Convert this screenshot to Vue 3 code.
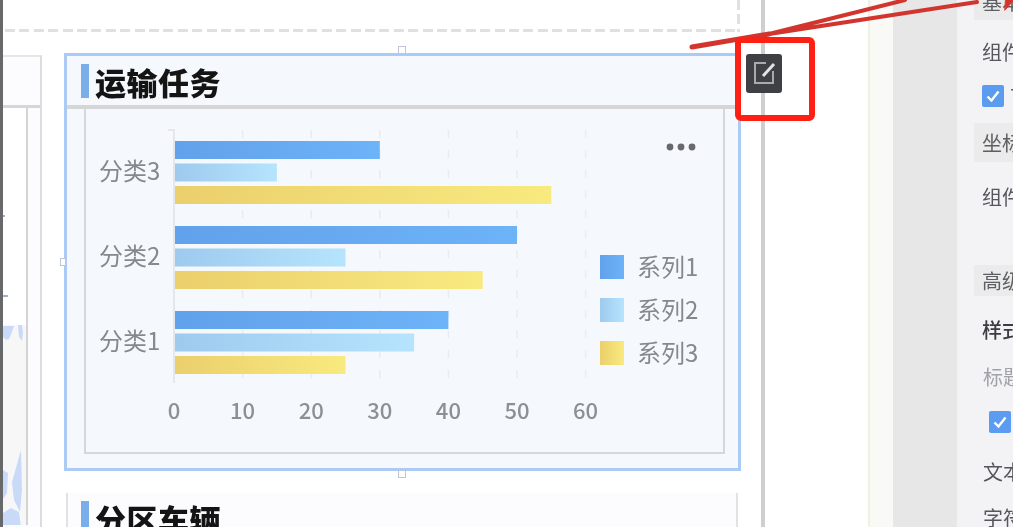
<template>
  <div class="page">
    <div class="strip"></div>

    <div class="canvas">
      <div class="top-dash"></div>
      <div class="cards">
        <div class="side-card">
          <div class="side-head"></div>
          <div class="side-body">
            <svg class="map" viewBox="3 108 23 417" preserveAspectRatio="none">
              <rect x="3" y="325" width="23" height="200" fill="#f7f7f8" />
              <path d="M3 216h2M3 296h5" stroke="#4a5f8f" stroke-width="1" />
              <path d="M3 326h11l-2 6-3 7-3 1-3-3zM18 325h4l1 8-1 8-3-4z" fill="#c9daf9" />
              <path d="M21 450l1 40-2 22-6-12-2-18 4-14zM3 470l5 3-1 20-4 6zM3 527v-14l8-5 8 4 2 15z" fill="#c9daf9" />
            </svg>
          </div>
        </div>

        <div class="col">
          <section class="card selected">
            <header class="card-head">
              <i class="mark"></i>
              <h2>运输任务</h2>
            </header>
            <div class="chart-box">
              <svg class="chart" viewBox="86 109 635 342">
                <defs>
                  <linearGradient v-for="s in series" :id="s.id" :key="s.id">
                    <stop offset="0" :stop-color="s.from" />
                    <stop offset="1" :stop-color="s.to" />
                  </linearGradient>
                </defs>

                <line
                  v-for="t in ticks.slice(1)"
                  :key="t"
                  :x1="xOf(t)"
                  :x2="xOf(t)"
                  y1="130"
                  y2="382"
                  class="grid"
                />
                <path d="M168 130h6v253" class="axis" />

                <template v-for="c in categories" :key="c.name">
                  <text x="99" :y="c.y + 39" class="label">{{ c.name }}</text>
                  <rect
                    v-for="(v, i) in c.values"
                    :key="i"
                    x="175"
                    :y="c.y + i * 22.5"
                    :width="v * 6.86 - 1"
                    height="18"
                    :fill="`url(#${series[i].id})`"
                  />
                </template>

                <text v-for="t in ticks" :key="t" :x="xOf(t)" y="419" class="tick">{{ t }}</text>

                <g v-for="(s, i) in series" :key="s.id">
                  <rect x="600" :y="255 + i * 43" width="24" height="24" :fill="`url(#${s.id})`" />
                  <text x="637" :y="276 + i * 43" class="label">{{ s.name }}</text>
                </g>

                <g fill="#67696d">
                  <circle cx="670" cy="147" r="3.4" />
                  <circle cx="681" cy="147" r="3.4" />
                  <circle cx="692" cy="147" r="3.4" />
                </g>
              </svg>
            </div>
            <i class="handle h-top"></i>
            <i class="handle h-left"></i>
            <i class="handle h-bottom"></i>
          </section>

          <section class="card">
            <header class="card-head">
              <i class="mark"></i>
              <h2>分区车辆</h2>
            </header>
          </section>
        </div>
      </div>
    </div>

    <div class="gutter"></div>
    <div class="rail"></div>
    <div class="rail-grey"></div>

    <aside class="panel">
      <div class="sec first">基本设置</div>
      <div class="row r1">组件名称</div>
      <div class="check c1">
        <svg viewBox="0 0 22 22"><path d="M5.5 11.5l4 4 7-9" /></svg>
        <span>可见</span>
      </div>
      <div class="sec s2">坐标设置</div>
      <div class="row r2">组件名称</div>
      <div class="sec s3">高级设置</div>
      <div class="row r3">样式设置</div>
      <div class="row r4">标题</div>
      <div class="check c2">
        <svg viewBox="0 0 22 22"><path d="M5.5 11.5l4 4 7-9" /></svg>
      </div>
      <div class="row r5">文本</div>
      <div class="row r6">字符</div>
    </aside>

    <!-- annotation layer -->
    <svg class="arrow" viewBox="0 0 1013 527">
      <path d="M692 47L769 34" class="tail" />
      <path d="M769 34L905 0M769 34L977 2" />
      <path d="M1005 10L1014 0L1014 -3L1006 -3z" class="head" />
    </svg>
    <div class="edit-btn">
      <svg viewBox="0 0 36 39">
        <path d="M20 9H9v20h18V17" class="frame" />
        <path d="M17 22L28 10" class="pen" />
      </svg>
    </div>
    <div class="red-box"></div>
  </div>
</template>

<script setup>
const ticks = [0, 10, 20, 30, 40, 50, 60];

const series = [
  { id: "s1", name: "系列1", from: "#62a1eb", to: "#6db3f8" },
  { id: "s2", name: "系列2", from: "#9ecaee", to: "#b6e4fd" },
  { id: "s3", name: "系列3", from: "#ebcf6c", to: "#f8ea7f" },
];

const categories = [
  { name: "分类3", y: 141, values: [30, 15, 55] },
  { name: "分类2", y: 226, values: [50, 25, 45] },
  { name: "分类1", y: 311, values: [40, 35, 25] },
];

function xOf(t) {
  return 174 + t * 6.86;
}
</script>

<style>
html,
body {
  margin: 0;
  overflow: hidden;
  background: #fff;
}
</style>

<style scoped>
.page {
  position: relative;
  display: flex;
  width: 1013px;
  height: 527px;
  overflow: hidden;
  background: #fff;
  font-family: "Noto Sans CJK SC", "Liberation Sans", sans-serif;
  filter: blur(0.7px);
}

.strip {
  flex: none;
  width: 3px;
  background: #66686a;
}

.canvas {
  flex: none;
  width: 758px;
  display: flex;
  flex-direction: column;
}

.top-dash {
  flex: none;
  width: 735px;
  height: 32px;
  margin-left: 2px;
  background:
    repeating-linear-gradient(90deg, #e0e0e0 0 10px, transparent 10px 14.4px) left bottom / 100% 3px no-repeat,
    repeating-linear-gradient(180deg, #e0e0e0 0 10px, transparent 10px 14.4px) right top / 3px 100% no-repeat;
}

.cards {
  display: flex;
  gap: 22px;
  padding-top: 21px;
}

.side-card {
  flex: none;
  width: 39px;
  height: 472px;
  margin-top: 2px;
  box-sizing: border-box;
  border-top: 2px solid #e6e6e6;
  border-right: 2px solid #dcdcdc;
  background: #fcfcfe;
}

.side-head {
  height: 48px;
  border-bottom: 3px solid #d6d6d6;
}

.side-body {
  width: 23px;
  height: 417px;
  border-right: 2px solid #d4d4d4;
  background: #fff;
}

.map {
  display: block;
  width: 23px;
  height: 417px;
}

.col {
  flex: none;
  width: 677px;
  display: flex;
  flex-direction: column;
  gap: 22px;
}

.card {
  position: relative;
  flex: none;
  box-sizing: border-box;
  margin: 0 3px 0 2px;
  height: 60px;
  border-left: 2px solid #e2e2e2;
  border-right: 2px solid #e2e2e2;
  background: #fcfcfe;
}

.card.selected {
  margin: 0;
  height: 418px;
  border: 3px solid #abcbf6;
  background: #f5f8fd;
}

.card-head {
  display: flex;
  height: 49px;
  box-sizing: border-box;
  padding: 8px 0 0 14px;
  gap: 6px;
}

.card:not(.selected) .card-head {
  padding-left: 13px;
}

.selected .card-head {
  height: 53px;
  border-bottom: 4px solid #d6d6d6;
}

.mark {
  flex: none;
  width: 8px;
  height: 34px;
  background: #7aaeea;
}

h2 {
  margin: -1px 0 0;
  font-size: 31px;
  line-height: 38px;
  font-weight: 900;
  letter-spacing: 0.5px;
  color: #141414;
}

.chart-box {
  box-sizing: border-box;
  width: 641px;
  height: 345px;
  margin-left: 17px;
  border: 2px solid #d6d7d9;
  border-top: none;
}

.chart {
  display: block;
  width: 635px;
  height: 342px;
}

.grid {
  stroke: #e9ecf1;
  stroke-width: 1.5;
  stroke-dasharray: 8 12;
}

.axis {
  fill: none;
  stroke: #dfe1e6;
  stroke-width: 1.5;
}

.label {
  font-size: 24px;
  fill: #85888d;
}

.tick {
  font-size: 22px;
  font-weight: 500;
  fill: #8c9095;
  text-anchor: middle;
}

.handle {
  position: absolute;
  width: 6px;
  height: 6px;
  border: 1.5px solid #bcc6d6;
  background: #fff;
}

.h-top {
  top: -10px;
  left: 331px;
}

.h-bottom {
  bottom: -10px;
  left: 331px;
}

.h-left {
  top: 202px;
  left: -7px;
  width: 4px;
}

.gutter {
  flex: none;
  box-sizing: border-box;
  width: 107px;
  border-left: 4px solid #cfcfcf;
}

.rail {
  flex: none;
  width: 25px;
  box-sizing: border-box;
  border-left: 2px solid #f0f0e6;
  background: #f9f9f6;
}

.rail-grey {
  flex: none;
  width: 64px;
  background: #e7e7e7;
}

.panel {
  flex: 1;
  min-width: 0;
  display: flex;
  flex-direction: column;
  padding-left: 17px;
  overflow: hidden;
  background: #f3f3f6;
  font-size: 20px;
  color: #55565a;
  white-space: nowrap;
}

.sec {
  flex: none;
  display: flex;
  align-items: center;
  padding-left: 8px;
  background: #ebebeb;
  color: #5e5f63;
}

.row {
  flex: none;
  height: 40px;
  line-height: 40px;
  padding-left: 8px;
}

.first {
  height: 38px;
  margin-top: -18px;
}

.r1 {
  margin-top: 12px;
}

.check {
  flex: none;
  display: flex;
  align-items: center;
  gap: 6px;
  height: 22px;
}

.check svg {
  flex: none;
  width: 22px;
  height: 22px;
  border-radius: 2px;
  background: #5b9bf0;
}

.check path {
  fill: none;
  stroke: #fff;
  stroke-width: 2.4;
}

.c1 {
  margin: 13px 0 0 8px;
}

.s2 {
  height: 39px;
  margin-top: 16px;
}

.r2 {
  margin-top: 15px;
}

.s3 {
  height: 31px;
  margin-top: 48px;
}

.r3 {
  margin-top: 14px;
  font-weight: 500;
  color: #3c3d40;
}

.r4 {
  margin-top: 7px;
  padding-left: 9px;
  color: #a2a3a7;
}

.c2 {
  margin: 14px 0 0 15px;
}

.r5 {
  margin-top: 19px;
  padding-left: 9px;
}

.r6 {
  margin-top: 6px;
  padding-left: 9px;
}

.arrow {
  position: absolute;
  inset: 0;
  width: 1013px;
  height: 527px;
  pointer-events: none;
}

.arrow path {
  fill: none;
  stroke: #d2352d;
  stroke-width: 4;
  stroke-linecap: round;
}

.arrow .tail {
  stroke-width: 5;
}

.arrow .head {
  fill: #d2352d;
  stroke-width: 1;
}

.edit-btn {
  position: absolute;
  left: 746px;
  top: 54px;
  width: 36px;
  height: 39px;
  border-radius: 3px;
  background: #3f4043;
}

.edit-btn svg {
  display: block;
  width: 36px;
  height: 39px;
}

.frame {
  fill: none;
  stroke: #a9aaac;
  stroke-width: 2;
}

.pen {
  fill: none;
  stroke: #e4e4e4;
  stroke-width: 3;
}

.red-box {
  position: absolute;
  left: 735px;
  top: 37px;
  box-sizing: border-box;
  width: 80px;
  height: 84px;
  border: 6px solid #ff2014;
  border-radius: 6px;
}
</style>
